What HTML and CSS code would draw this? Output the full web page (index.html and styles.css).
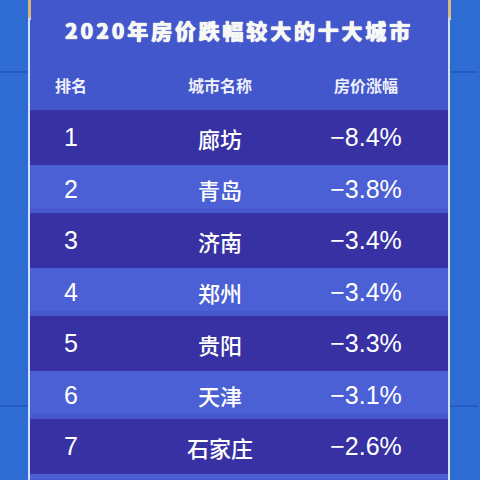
FILE: index.html
```html
<!DOCTYPE html>
<html lang="zh-CN">
<head>
  <meta charset="UTF-8">
  <meta name="viewport" content="width=device-width, initial-scale=1.0">
  <title>2020年房价跌幅较大的十大城市</title>
  <link rel="stylesheet" href="styles.css">
</head>
<body>

  <div class="side"></div>

  <div class="board">
    <h1 class="board-title">2020年房价跌幅较大的十大城市</h1>

    <div class="row head">
      <div>排名</div>
      <div>城市名称</div>
      <div>房价涨幅</div>
    </div>

    <div class="row dark">
      <div class="rank">1</div>
      <div class="city">廊坊</div>
      <div class="rate">−8.4%</div>
    </div>
    <div class="row light">
      <div class="rank">2</div>
      <div class="city">青岛</div>
      <div class="rate">−3.8%</div>
    </div>
    <div class="row dark">
      <div class="rank">3</div>
      <div class="city">济南</div>
      <div class="rate">−3.4%</div>
    </div>
    <div class="row light">
      <div class="rank">4</div>
      <div class="city">郑州</div>
      <div class="rate">−3.4%</div>
    </div>
    <div class="row dark">
      <div class="rank">5</div>
      <div class="city">贵阳</div>
      <div class="rate">−3.3%</div>
    </div>
    <div class="row light">
      <div class="rank">6</div>
      <div class="city">天津</div>
      <div class="rate">−3.1%</div>
    </div>
    <div class="row dark">
      <div class="rank">7</div>
      <div class="city">石家庄</div>
      <div class="rate">−2.6%</div>
    </div>
    <div class="row light tail"></div>
  </div>

  <div class="side"></div>

</body>
</html>
```

FILE: styles.css
```css
body {
  margin: 0;
  height: 480px;
  overflow: hidden;
  display: flex;
  background-color: #2e6bd3;
  font-family: "Liberation Sans", "Noto Sans CJK SC", sans-serif;
  color: #fff;
}

.side {
  width: 28px;
  background:
    linear-gradient(to bottom, transparent 71px, rgba(20, 60, 160, 0.35) 71px, rgba(20, 60, 160, 0.35) 73px, transparent 73px),
    linear-gradient(to bottom, transparent 405px, rgba(20, 60, 160, 0.35) 405px, rgba(20, 60, 160, 0.35) 407px, transparent 407px);
}

.board {
  position: relative;
  width: 418px;
  background-color: #4257cb;
  border-left: 2px solid #cfe2ff;
  border-right: 2px solid #cfe2ff;
}

/* gold caps on top of the frame lines */
.board::before,
.board::after {
  content: "";
  position: absolute;
  top: 0;
  width: 3px;
  height: 20px;
  background: linear-gradient(to bottom, #d9b67c 80%, #cfe2ff);
}

.board::before {
  left: -2px;
}

.board::after {
  right: -3px;
}

.board-title {
  margin: 0;
  height: 60px;
  line-height: 60px;
  text-align: center;
  font-family: "Noto Sans CJK SC", sans-serif;
  font-size: 21px;
  font-weight: 900;
  letter-spacing: 2.8px;
  color: #f7f7f4;
  text-shadow: 0 0 1px #fff, 0 0 1px #fff;
}

.row {
  display: grid;
  grid-template-columns: 82px 216px 76px 1fr;
  align-items: center;
  text-align: center;
}

.head {
  height: 50px;
  font-family: "Noto Sans CJK SC", sans-serif;
  font-size: 16px;
  font-weight: 700;
  color: #eef0fb;
  padding-bottom: 1px;
  box-sizing: border-box;
}

.dark {
  height: 55px;
  background-color: #3731a4;
}

.light {
  height: 48px;
  background-color: #4b60d4;
  box-shadow: inset 0 -5px 0 #4658cc;
}

.tail {
  height: 5px;
  box-shadow: none;
}

.rank {
  font-size: 25px;
}

.city {
  font-family: "Noto Sans CJK SC", sans-serif;
  font-size: 22px;
  font-weight: 500;
}

.rate {
  font-size: 25px;
  white-space: nowrap;
}
```
